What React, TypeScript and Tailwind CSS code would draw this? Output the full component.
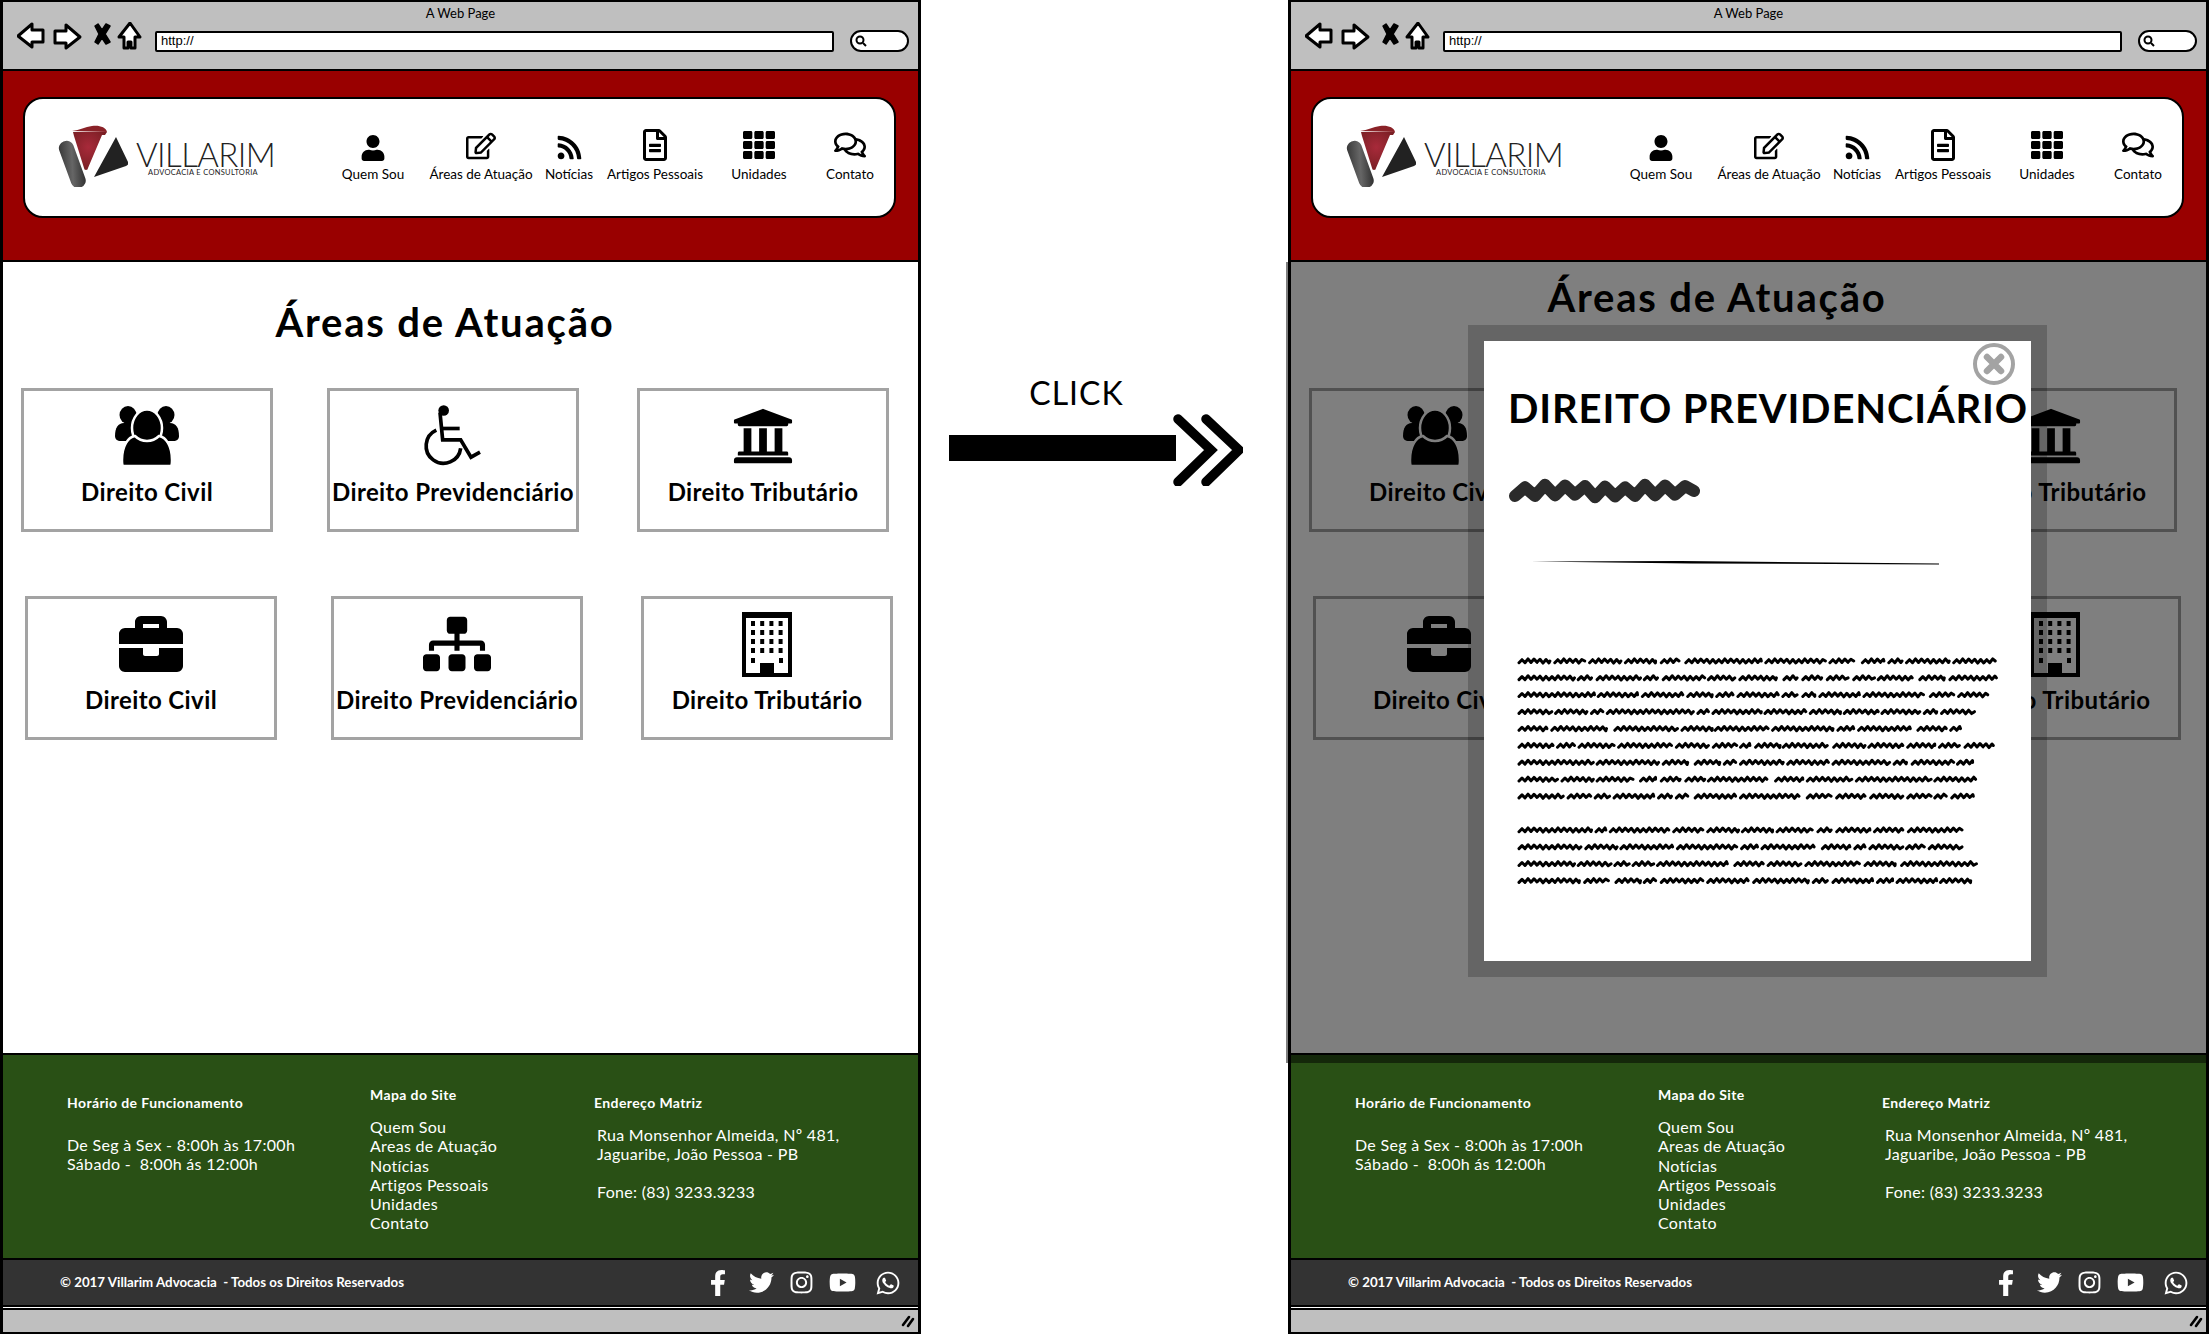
import React from "react";
import {
  FaUser, FaRegEdit, FaRss, FaRegFileAlt, FaTh, FaRegComments, FaUniversity, FaBriefcase, FaSitemap,
  FaFacebookF, FaTwitter, FaInstagram, FaYoutube, FaWhatsapp,
} from "react-icons/fa";

const UsersIcon = () => (
  <svg width="64" height="60" viewBox="0 0 64 60">
    <ellipse cx="13" cy="9" rx="8.5" ry="9" fill="#000" />
    <ellipse cx="51" cy="9" rx="8.5" ry="9" fill="#000" />
    <path d="M0 30c0-8 3-13 9-13h46c6 0 9 5 9 13 0 3-2 5-6 5H6c-4 0-6-2-6-5z" fill="#000" />
    <ellipse cx="32" cy="22" rx="15" ry="18.5" fill="#000" stroke="#fff" strokeWidth="2.5" />
    <path d="M8 60c-1-1-1-3-1-6 0-14 6-23 13-24 3 3 7 5 12 5s9-2 12-5c7 1 13 10 13 24 0 3 0 5-1 6z" fill="#000" stroke="#fff" strokeWidth="2.5" />
  </svg>
);

const WheelIcon = () => (
  <svg width="60" height="67" viewBox="70 40 180 200" fill="none" stroke="#000" strokeWidth="11">
    <circle cx="132" cy="62" r="16" fill="#000" stroke="none" />
    <path d="M121 68l8 82h54l31 52 27-15" strokeLinejoin="miter" />
    <path d="M130 116h50" />
    <path d="M110 121a52 52 0 1 0 73 54" />
  </svg>
);

const BuildingIcon = () => {
  const cells = [];
  for (let r = 0; r < 4; r++) {
    for (let c = 0; c < 4; c++) {
      cells.push(<rect key={`${r}-${c}`} x={9 + c * 9.2} y={9 + r * 9} width="4" height="5" fill="#000" />);
    }
  }
  return (
    <svg width="50" height="65" viewBox="0 0 50 65">
      <rect x="2" y="2" width="46" height="61" fill="#fff" stroke="#000" strokeWidth="4" />
      <rect x="0" y="0" width="50" height="6" fill="#000" />
      {cells}
      <rect x="9" y="46" width="4" height="5" fill="#000" />
      <rect x="37" y="46" width="4" height="5" fill="#000" />
      <rect x="18" y="51" width="14" height="13" fill="#000" />
    </svg>
  );
};

const BrowserNav = () => (
  <svg width="130" height="30" viewBox="17 23 130 30" fill="#fff" stroke="#000" strokeWidth="3" strokeLinejoin="round">
    <path d="M18 37l14-12v6h11v12H32v5z" />
    <path d="M80 38L66 26v6H55v12h11v5z" />
    <path d="M95 27l3-2 4 6 4-6 4 2-5 8 5 8-4 2-4-6-4 6-3-2 4-8z" fill="#000" strokeWidth="1.5" />
    <path d="M130 24l10 14h-5v11h-4v-6h-3v6h-4V38h-5z" />
  </svg>
);

const Logo = () => (
  <svg width="70" height="62" viewBox="60 125 70 62">
    <defs>
      <radialGradient id="lg-red" cx="0.45" cy="0.4" r="0.6">
        <stop offset="0" stopColor="#a82a3a" />
        <stop offset="1" stopColor="#7a1f24" />
      </radialGradient>
      <linearGradient id="lg-gray" x1="0" y1="0" x2="1" y2="1">
        <stop offset="0" stopColor="#333" />
        <stop offset="0.5" stopColor="#666" />
        <stop offset="1" stopColor="#2a2a2a" />
      </linearGradient>
    </defs>
    <path d="M75 132h34l-2 3h-3l-14 33a2 2 0 0 1-4 0L76 136z" fill="url(#lg-red)" />
    <path d="M74 131c8-1 13-4 20-5s14 1 15 6z" fill="#8a2228" />
    <rect x="67" y="140" width="15" height="49" rx="7" fill="url(#lg-gray)" transform="rotate(-20 74 165)" />
    <path d="M118 137l12 25c1 2 0 3-2 4l-32 11z" fill="#222" />
  </svg>
);

function scribble(a: number, b: number, y: number, step: number, amp: number) {
  let d = `M${a.toFixed(1)} ${(y + amp).toFixed(1)}`;
  let i = 0;
  for (let x = a + step; x < b; x += step) {
    const vary = 0.75 + 0.25 * ((i * 7) % 5) / 2;
    d += `L${x.toFixed(1)} ${(y + (i % 2 ? amp : -amp) * vary).toFixed(1)}`;
    i++;
  }
  return d + `L${b.toFixed(1)} ${y.toFixed(1)}`;
}

const LINES: [number, number[]][] = [
  [0, [148,230,243,322,335,418,430,510,525,572,590,790,802,960,972,1035,1058,1115,1128,1163,1175,1288,1300,1410]],
  [1, [148,295,305,340,355,470,480,515,530,640,650,720,733,830,850,885,900,950,965,1020,1035,1090,1100,1190,1210,1275,1290,1413]],
  [2, [148,348,358,462,475,582,595,660,672,715,728,835,847,885,900,932,945,1050,1062,1220,1238,1300,1313,1390]],
  [3, [148,235,245,328,340,370,382,610,622,650,662,790,800,908,920,1000,1010,1100,1110,1210,1222,1255,1268,1355]],
  [4, [148,222,235,380,402,568,580,660,668,808,820,980,993,1035,1048,1185,1205,1280,1292,1318]],
  [5, [148,238,250,295,307,400,412,552,565,650,663,725,735,760,775,840,848,965,982,1065,1075,1165,1178,1250,1262,1315,1330,1405]],
  [6, [148,345,355,518,530,595,615,680,692,722,735,848,860,968,980,1130,1142,1175,1190,1300,1310,1350]],
  [7, [148,250,262,345,355,450,470,510,525,575,590,640,650,805,828,900,912,1030,1042,1240,1250,1358]],
  [8, [148,265,278,338,350,388,400,505,518,552,565,595,615,722,735,890,912,975,990,1065,1080,1165,1178,1240,1250,1280,1295,1352]],
  [10, [148,340,352,378,390,545,558,635,648,730,740,820,832,925,940,975,990,1078,1090,1165,1180,1322]],
  [11, [148,312,325,408,418,555,568,725,738,780,792,930,952,1025,1038,1065,1078,1165,1175,1222,1235,1322]],
  [12, [148,295,305,392,402,440,450,505,515,700,720,795,808,895,908,1050,1065,1145,1162,1360]],
  [13, [148,308,322,385,405,470,480,510,525,635,648,755,770,915,928,965,980,1085,1098,1138,1150,1255,1265,1345]],
];

const ScribbleText = () => {
  let d = "";
  for (const [row, xs] of LINES) {
    for (let i = 0; i < xs.length; i += 2) {
      d += scribble((xs[i] - 148) / 2.65 + 2, (xs[i + 1] - 148) / 2.65 + 2, 10 + row * 16.9, 3, 1.7);
    }
  }
  return (
    <svg width="490" height="240" viewBox="0 0 490 240" fill="none" stroke="#000" strokeWidth="3" strokeLinecap="round" strokeLinejoin="round">
      <path d={d} />
    </svg>
  );
};

const NAV = [
  { label: "Quem Sou", w: "w-[100px]", icon: <FaUser size={26} /> },
  { label: "Áreas de Atuação", w: "w-[116px]", icon: <FaRegEdit size={30} /> },
  { label: "Notícias", w: "w-[60px]", icon: <FaRss size={27} /> },
  { label: "Artigos Pessoais", w: "w-[112px]", icon: <FaRegFileAlt size={32} /> },
  { label: "Unidades", w: "w-[96px]", icon: <FaTh size={32} /> },
  { label: "Contato", w: "w-[86px]", icon: <FaRegComments size={32} /> },
];

const Card = ({ label, icon, offset }: { label: string; icon: React.ReactNode; offset: string }) => (
  <div className={`w-[252px] h-[144px] shrink-0 border-[3px] border-[#a3a3a3] bg-white flex flex-col items-center pt-[12px] ${offset}`}>
    <div className="h-[66px] w-full flex items-center justify-center">{icon}</div>
    <div className="mt-[9px] text-[24px] leading-[28px] tracking-[0.4px] font-bold text-black whitespace-nowrap">{label}</div>
  </div>
);

const Window = ({ modal }: { modal?: boolean }) => (
  <div className="w-[921px] h-[1334px] shrink-0 flex flex-col border-x-[3px] border-b-2 border-black font-['Lato',sans-serif] text-black">
    {/* browser chrome */}
    <div className="h-[71px] shrink-0 bg-[#bfbfbf] border-y-2 border-black">
      <div className="h-[20px] text-center text-[13px] leading-[20px] pt-px">A Web Page</div>
      <div className="flex items-start pl-[14px]">
        <BrowserNav />
        <div className="ml-[8px] mt-[9px] w-[679px] h-[21px] bg-white border-2 border-black rounded-[2px] pl-[4px] text-[13px] leading-[16px] font-['Liberation_Sans',sans-serif]">http://</div>
        <div className="ml-[16px] mt-[8px] w-[59px] h-[22px] bg-white border-2 border-black rounded-full flex items-center pl-[3px]">
          <svg width="12" height="12" viewBox="0 0 12 12" fill="none" stroke="#000" strokeWidth="2">
            <circle cx="5" cy="5" r="3.5" />
            <path d="M8 8l3 3" />
          </svg>
        </div>
      </div>
    </div>

    {/* red header */}
    <div className="h-[189px] shrink-0 bg-[#990000] pt-[26px] pl-[20px] pr-[22px]">
      <div className="h-[121px] rounded-[20px] border-2 border-black bg-white flex">
        <div className="w-[298px] shrink-0 pl-[33px] pt-[26px] flex items-start">
          <Logo />
          <div className="ml-[8px] mt-[15px] flex flex-col">
            <span className="text-[33px] leading-[28px] font-light tracking-[-0.6px] text-[#222] whitespace-nowrap">VILLARIM</span>
            <span className="ml-[12px] text-[7.5px] leading-[10px] text-[#222] tracking-[0.3px] whitespace-nowrap">ADVOCACIA E CONSULTORIA</span>
          </div>
        </div>
        {NAV.map((n) => (
          <div key={n.label} className={`${n.w} shrink-0 flex flex-col items-center pt-[26px]`}>
            <div className="h-[37px] flex items-end pb-[1px]">{n.icon}</div>
            <div className="mt-[4px] text-[13.5px] leading-[16px] whitespace-nowrap">{n.label}</div>
          </div>
        ))}
      </div>
    </div>

    {/* main */}
    <div className="h-[793px] shrink-0 relative bg-white border-t-2 border-black">
      <div className={`h-[126px] text-center text-[40px] leading-[46px] font-bold tracking-[1.8px] ${modal ? "pt-[12px] pr-[63px]" : "pt-[37px] pr-[31px]"}`}>
        Áreas de Atuação
      </div>
      <div className="flex pl-[18px]">
        <Card label="Direito Civil" icon={<UsersIcon />} offset="" />
        <Card label="Direito Previdenciário" icon={<WheelIcon />} offset="ml-[54px]" />
        <Card label="Direito Tributário" icon={<FaUniversity size={62} />} offset="ml-[58px]" />
      </div>
      <div className="flex pl-[22px] mt-[64px]">
        <Card label="Direito Civil" icon={<FaBriefcase size={64} />} offset="" />
        <Card label="Direito Previdenciário" icon={<FaSitemap size={68} />} offset="ml-[54px]" />
        <Card label="Direito Tributário" icon={<BuildingIcon />} offset="ml-[58px]" />
      </div>

      {modal && (
        <div className="absolute -left-[5px] -right-[3px] top-0 -bottom-[10px] bg-black/50 z-10">
          <div className="absolute left-[182px] top-[63px] w-[579px] h-[652px] p-4 bg-black/20">
            <div className="relative h-full bg-white">
              <div className="absolute right-[16px] top-[2px] w-[42px] h-[42px] rounded-full border-[4px] border-[#a3a3a3] flex items-center justify-center">
                <svg width="22" height="22" viewBox="0 0 22 22" stroke="#a3a3a3" strokeWidth="6.5" strokeLinecap="round">
                  <path d="M4 4l14 14M18 4L4 18" />
                </svg>
              </div>
              <div className="pt-[42px] pl-[24px] h-[92px] text-[40px] leading-[50px] font-bold tracking-[0.85px] whitespace-nowrap">
                DIREITO PREVIDENCIÁRIO
              </div>
              <svg className="ml-[24px] mt-[45px] block" width="193" height="26" viewBox="0 0 193 26" fill="none" stroke="#2b2b2b" strokeWidth="12" strokeLinecap="round" strokeLinejoin="round">
                <path d={scribble(7, 186, 13, 10, 5)} />
              </svg>
              <svg className="ml-[47px] mt-[57px] block" width="408" height="4" viewBox="0 0 408 4">
                <path d="M0 0.5L150 0 408 2.5 408 3.5 160 2.5z" fill="#000" />
              </svg>
              <div className="ml-[33px] mt-[86px]">
                <ScribbleText />
              </div>
            </div>
          </div>
        </div>
      )}
    </div>

    {/* green footer */}
    <div className="h-[205px] shrink-0 bg-[#295015] border-t-2 border-black text-white flex pl-[64px]">
      <div className="w-[303px] shrink-0 pt-[39px]">
        <div className="text-[14px] leading-[18px] tracking-[0.4px] font-bold">Horário de Funcionamento</div>
        <div className="mt-[23px] text-[16px] leading-[19px] tracking-[0.3px]">
          De Seg à Sex - 8:00h às 17:00h
          <br />
          Sábado -&nbsp; 8:00h ás 12:00h
        </div>
      </div>
      <div className="w-[224px] shrink-0 pt-[31px]">
        <div className="text-[14px] leading-[18px] tracking-[0.4px] font-bold">Mapa do Site</div>
        <div className="mt-[13px] text-[16px] leading-[19.3px] tracking-[0.3px]">
          <div>Quem Sou</div>
          <div>Areas de Atuação</div>
          <div>Notícias</div>
          <div>Artigos Pessoais</div>
          <div>Unidades</div>
          <div>Contato</div>
        </div>
      </div>
      <div className="pt-[39px]">
        <div className="text-[14px] leading-[18px] tracking-[0.4px] font-bold">Endereço Matriz</div>
        <div className="mt-[13px] ml-[3px] text-[16px] leading-[19px] tracking-[0.3px]">
          Rua Monsenhor Almeida, Nº 481,
          <br />
          Jaguaribe, João Pessoa - PB
          <div className="mt-[19px]">Fone: (83) 3233.3233</div>
        </div>
      </div>
    </div>

    {/* copyright bar */}
    <div className="h-[47px] shrink-0 bg-[#333333] border-t-2 border-black text-white flex items-center justify-between pl-[57px] pr-[17px]">
      <div className="text-[13.3px] font-bold whitespace-nowrap">© 2017 Villarim Advocacia&nbsp; - Todos os Direitos Reservados</div>
      <div className="flex items-center">
        <FaFacebookF size={26} />
        <FaTwitter size={25} className="ml-[18px]" />
        <FaInstagram size={25} className="ml-[15px]" />
        <FaYoutube size={27} className="ml-[15px]" />
        <FaWhatsapp size={26} className="ml-[19px]" />
      </div>
    </div>

    <div className="h-[5px] shrink-0 bg-white border-y-2 border-black" />
    <div className="flex-1 bg-[#bfbfbf] flex items-center justify-end pr-[3px]">
      <svg width="14" height="14" viewBox="0 0 14 14" stroke="#000" strokeWidth="2.6" strokeLinecap="round">
        <path d="M2 11l6-8M7 12l5-7" />
      </svg>
    </div>
  </div>
);

export default function App() {
  return (
    <div className="flex w-[2209px] h-[1336px] bg-white overflow-hidden">
      <Window />
      <div className="w-[367px] shrink-0 pt-[375px] pl-[28px] font-['Lato',sans-serif]">
        <div className="w-[255px] h-[36px] text-center text-[32px] leading-[36px] tracking-[1px] text-black">CLICK</div>
        <svg className="block mt-[3px]" width="294" height="72" viewBox="949 414 294 72">
          <rect x="949" y="435" width="227" height="26" fill="#000" />
          <path d="M1178 419l33 31-33 32M1206 419l33 31-33 32" fill="none" stroke="#000" strokeWidth="9.5" strokeLinecap="round" strokeLinejoin="miter" />
        </svg>
      </div>
      <Window modal />
    </div>
  );
}
